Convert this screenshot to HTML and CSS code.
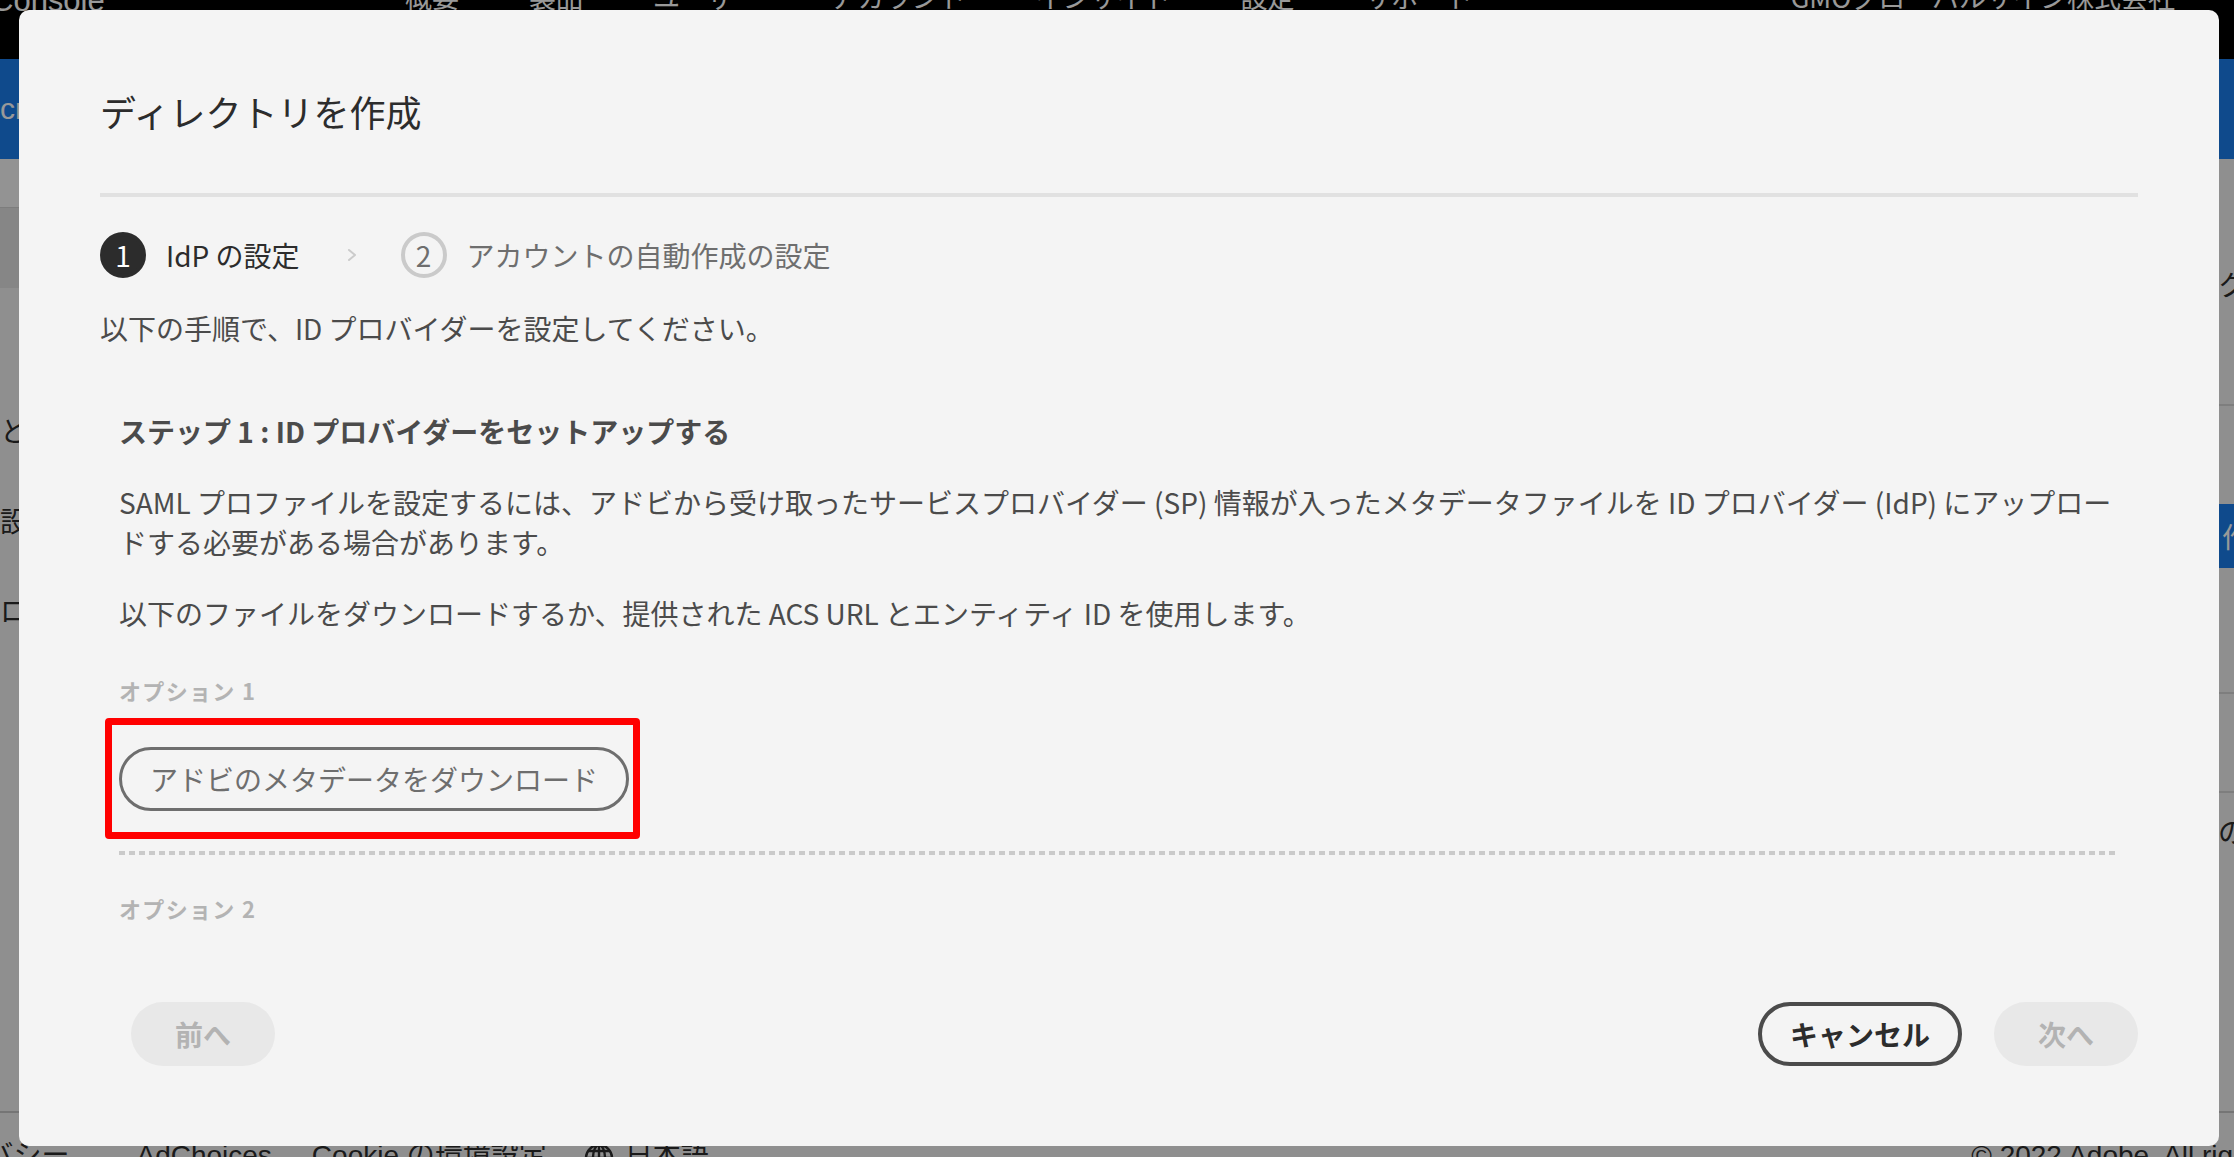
FILE: index.html
```html
<!DOCTYPE html>
<html lang="ja">
<head>
    <meta charset="UTF-8">
    <meta name="viewport" content="width=device-width, initial-scale=1.0">
    <title>ディレクトリを作成 – Admin Console</title>
    <link rel="stylesheet" href="styles.css">
</head>
<body>

<div class="page">
    <header class="topbar">
        <span class="brand">Console</span>
        <nav class="topnav">
            <a>概要</a>
            <a>製品</a>
            <a>ユーザー</a>
            <a>アカウント</a>
            <a>インサイト</a>
            <a class="current">設定</a>
            <a>サポート</a>
        </nav>
        <span class="org">GMOグローバルサイン株式会社</span>
    </header>

    <div class="banner"><span class="banner-title">cr</span></div>

    <div class="workspace">
        <aside class="sidenav">
            <div class="sidenav-head"></div>
            <div class="sidenav-filter"></div>
            <ul class="sidenav-list">
                <li>とセキュリティ</li>
                <li>設定</li>
                <li>ログ</li>
            </ul>
        </aside>
        <main class="listing"></main>
        <aside class="quick">
            <h3 class="quick-title">クイックリンク</h3>
            <div class="quick-actions">
                <span class="quick-btn">作成</span>
            </div>
            <div class="quick-row"></div>
            <div class="quick-row quick-text">の表示</div>
        </aside>
    </div>

    <footer class="site-footer">
        <a class="first">プライバシー</a>
        <a>AdChoices</a>
        <a>Cookie の環境設定</a>
        <a class="lang">
            <svg width="32" height="32" viewBox="0 0 32 32" fill="none" stroke="currentColor" stroke-width="2.4">
                <circle cx="16" cy="16" r="13"/>
                <ellipse cx="16" cy="16" rx="6" ry="13"/>
                <path d="M16 3v26M3 16h26M5 9h22M5 23h22"/>
            </svg>
            日本語 <span class="caret">⌄</span>
        </a>
        <span class="copyright">© 2022 Adobe. All rights reserved.</span>
    </footer>
</div>

<div class="underlay"></div>

<section class="dialog" role="dialog" aria-labelledby="dialog-title">
    <h2 class="dialog-title" id="dialog-title">ディレクトリを作成</h2>
    <hr class="dialog-divider">

    <div class="dialog-body">
        <ol class="stepper">
            <li class="step current"><span class="step-num">1</span><span class="step-label">IdP の設定</span></li>
            <li class="step-sep">
                <svg width="12" height="16" viewBox="0 0 12 16"><path d="M3 3l6 5-6 5" fill="none" stroke="#cbcbcb" stroke-width="2" stroke-linecap="round" stroke-linejoin="round"/></svg>
            </li>
            <li class="step"><span class="step-num">2</span><span class="step-label">アカウントの自動作成の設定</span></li>
        </ol>

        <p class="intro">以下の手順で、ID プロバイダーを設定してください。</p>

        <div class="setup">
            <h3 class="setup-title">ステップ 1 : ID プロバイダーをセットアップする</h3>
            <p>SAML プロファイルを設定するには、アドビから受け取ったサービスプロバイダー (SP) 情報が入ったメタデータファイルを ID プロバイダー (IdP) にアップロードする必要がある場合があります。</p>
            <p>以下のファイルをダウンロードするか、提供された ACS URL とエンティティ ID を使用します。</p>

            <div class="option">
                <h4 class="option-label">オプション 1</h4>
                <div class="marked">
                    <button class="btn btn-outline">アドビのメタデータをダウンロード</button>
                    <span class="mark"></span>
                </div>
            </div>

            <div class="option option-split">
                <h4 class="option-label">オプション 2</h4>
                <div class="field">
                    <label>ACS URL</label>
                    <code>https://federatedid-na1.services.adobe.com/federated/saml/SSO</code>
                </div>
                <div class="field">
                    <label>エンティティ ID</label>
                    <code>https://federatedid-na1.services.adobe.com/federated/saml/metadata</code>
                </div>
            </div>
        </div>
    </div>

    <div class="dialog-footer">
        <button class="btn btn-quiet" disabled>前へ</button>
        <span class="spacer"></span>
        <button class="btn btn-secondary">キャンセル</button>
        <button class="btn btn-quiet" disabled>次へ</button>
    </div>
</section>

</body>
</html>
```

FILE: styles.css
```css
* {
    box-sizing: border-box;
}

html, body {
    margin: 0;
    height: 100%;
}

body {
    font-family: "Noto Sans CJK JP", "Noto Sans", sans-serif;
    color: #2c2c2c;
    background-color: #efefef;
    overflow: hidden;
}

/* ---- app behind the dialog ---- */

.page {
    width: 2500px;
    height: 100vh;
    display: flex;
    flex-direction: column;
}

.topbar {
    height: 59px;
    flex: none;
    display: flex;
    align-items: flex-start;
    background-color: #000;
    color: #fff;
    font-size: 27px;
    line-height: 27px;
}

.topbar .topnav,
.topbar .org {
    margin-top: -17px;
}

.brand {
    flex: 0 0 414px;
    margin-top: -13px;
    margin-left: -9px;
    font-family: "Liberation Sans", sans-serif;
    font-size: 31px;
}

.topnav {
    display: flex;
    gap: 70px;
}

.org {
    margin-left: auto;
    margin-right: 325px;
}

.banner {
    height: 100px;
    flex: none;
    background-color: #1a7cea;
    color: #fff;
    font-family: "Liberation Sans", sans-serif;
    font-size: 30px;
    padding-top: 33px;
}

.workspace {
    flex: 1;
    display: grid;
    grid-template-columns: 380px 1fr 282px;
}

.sidenav-head {
    height: 48px;
    background-color: #f6f6f6;
}

.sidenav-filter {
    height: 81px;
    background-color: #e0e0e0;
    border-top: 1px solid #d0d0d0;
}

.sidenav-list {
    list-style: none;
    margin: 97px 0 0;
    padding: 0;
    font-size: 28px;
}

.sidenav-list li {
    line-height: 90px;
}

.quick {
    padding-top: 105px;
}

.quick-title {
    margin: 0;
    font-size: 28px;
    font-weight: 400;
    line-height: 40px;
}

.quick-actions {
    margin-top: 100px;
    border-top: 2px solid #d3d3d3;
    padding-top: 98px;
    height: 290px;
    border-bottom: 2px solid #d3d3d3;
}

.quick-btn {
    display: block;
    margin-left: -20px;
    height: 64px;
    padding-left: 24px;
    line-height: 64px;
    background-color: #1a7cea;
    color: #fff;
    font-size: 28px;
}

.quick-row {
    height: 99px;
    border-bottom: 2px solid #d3d3d3;
}

.quick-text {
    border-bottom: none;
    font-size: 28px;
    line-height: 76px;
}

.site-footer {
    height: 46px;
    flex: none;
    display: flex;
    align-items: flex-start;
    gap: 40px;
    padding-top: 29px;
    border-top: 2px solid #c4c4c4;
    font-family: "Liberation Sans", "Noto Sans CJK JP", sans-serif;
    font-size: 28px;
    line-height: 28px;
    color: #2c2c2c;
}

.site-footer .first {
    margin-left: -98px;
    margin-right: 27px;
}

.site-footer .lang {
    display: flex;
    gap: 10px;
    margin-left: -4px;
}

.site-footer .caret {
    margin-left: 14px;
}

.copyright {
    margin-left: auto;
    margin-right: 105px;
}

.underlay {
    position: fixed;
    inset: 0;
    background-color: rgba(0, 0, 0, 0.4);
}

/* ---- dialog ---- */

.dialog {
    position: fixed;
    left: 19px;
    top: 10px;
    width: 2200px;
    height: 1136px;
    display: flex;
    flex-direction: column;
    padding: 78px 81px 80px;
    background-color: #f4f4f4;
    border-radius: 10px;
    font-size: 28px;
    color: #4b4b4b;
}

.dialog-title {
    margin: 0;
    font-size: 36px;
    font-weight: 400;
    line-height: 46px;
    color: #2c2c2c;
}

.dialog-divider {
    flex: none;
    height: 4px;
    margin: 59px 0 0;
    border: 0;
    background-color: #e1e1e1;
}

.dialog-body {
    flex: 1;
    overflow: hidden;
}

.stepper {
    display: flex;
    align-items: center;
    list-style: none;
    margin: 35px 0 0;
    padding: 0;
    height: 46px;
}

.step {
    display: flex;
    align-items: center;
    gap: 20px;
    color: #6e6e6e;
}

.step-num {
    width: 46px;
    height: 46px;
    display: flex;
    align-items: center;
    justify-content: center;
    border: 4px solid #cacaca;
    border-radius: 50%;
    font-size: 28px;
    color: #6e6e6e;
}

.step.current {
    color: #2c2c2c;
}

.step.current .step-num {
    border-color: #2c2c2c;
    background-color: #2c2c2c;
    color: #fff;
}

.step-sep {
    display: flex;
    margin: 0 43px 0 46px;
}

.intro {
    margin: 30px 0 0;
    line-height: 40px;
}

.setup {
    margin-top: 63px;
    padding: 0 19px;
}

.setup-title {
    margin: 0;
    font-size: 28px;
    font-weight: 700;
    line-height: 40px;
    color: #4b4b4b;
}

.setup p {
    margin: 31px 0 0;
    line-height: 40px;
}

.option {
    margin-top: 41px;
}

.option-label {
    margin: 0;
    font-size: 22px;
    font-weight: 700;
    line-height: 32px;
    letter-spacing: 0.06em;
    color: #b3b3b3;
}

.option-split {
    margin-top: 40px;
    padding-top: 41px;
    background: repeating-linear-gradient(90deg, #cacaca 0 6px, transparent 6px 10px) top left / 100% 4px no-repeat;
}

.field {
    margin-top: 40px;
}

.field label {
    display: block;
    font-size: 24px;
    color: #6e6e6e;
}

.field code {
    display: block;
    font-family: "Liberation Mono", monospace;
    font-size: 24px;
}

/* outlined download button with its red callout frame */
.marked {
    position: relative;
    display: inline-block;
    margin-top: 41px;
    vertical-align: top;
}

.mark {
    position: absolute;
    top: -29px;
    bottom: -28px;
    left: -14px;
    right: -11px;
    border: 7px solid #ff0000;
    border-radius: 4px;
}

.btn {
    display: inline-flex;
    align-items: center;
    justify-content: center;
    height: 64px;
    min-width: 144px;
    padding: 0 28px;
    border: 4px solid transparent;
    border-radius: 32px;
    font-family: inherit;
    font-size: 28px;
    font-weight: 700;
    background: none;
    vertical-align: top;
}

.btn-outline {
    border-width: 3px;
    border-color: #6e6e6e;
    color: #6e6e6e;
    font-weight: 400;
}

.btn-secondary {
    border-color: #4b4b4b;
    color: #2c2c2c;
}

.btn-quiet {
    background-color: #e8e8e8;
    color: #b3b3b3;
}

.dialog-footer {
    display: flex;
    align-items: center;
    gap: 32px;
    padding-top: 40px;
}

.dialog-footer .btn:first-child {
    margin-left: 31px;
}

.spacer {
    flex: 1;
}
```
